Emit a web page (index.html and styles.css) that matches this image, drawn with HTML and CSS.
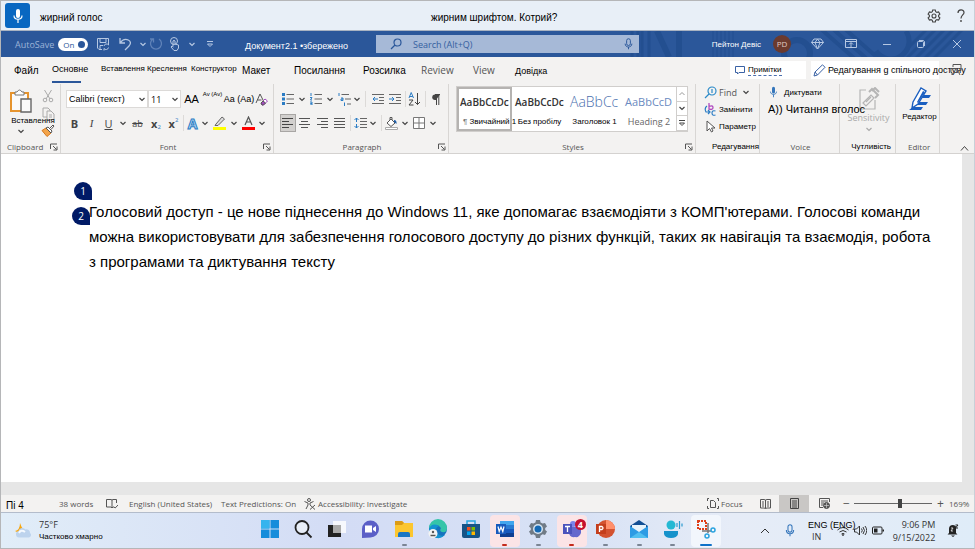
FILE: index.html
```html
<!DOCTYPE html>
<html lang="uk">
<head>
<meta charset="utf-8">
<title>Документ2.1</title>
<link rel="stylesheet" href="styles.css">
</head>
<body>
<svg class="defs" aria-hidden="true">
  <symbol id="chev" viewBox="0 0 8 8"><path d="M1.500 3 4 5.500 6.500 3" fill="none" stroke="currentColor" stroke-width="1.200"/></symbol>
  <symbol id="launch" viewBox="0 0 8 8"><path d="M.5 6V1H7M3 3l3.500 3.500M7 3.500V7H3.500" fill="none" stroke="#555"/></symbol>
  <symbol id="mic" viewBox="0 0 12 16"><rect x="4" y="1" width="4" height="9" rx="2" fill="currentColor"/><path d="M2 7.500c0 5 8 5 8 0M6 11.500V15" fill="none" stroke="currentColor" stroke-width="1.200"/></symbol>
  <symbol id="mic-line" viewBox="0 0 12 16"><rect x="3.500" y="1" width="5" height="9" rx="2.500" fill="none" stroke="currentColor" stroke-width="1.300"/><path d="M1.500 7.500c0 6 9 6 9 0M6 12v3" fill="none" stroke="currentColor" stroke-width="1.300"/></symbol>
</svg>
<div class="app">
  <header class="voice">
    <button class="voice-mic" aria-label="Мікрофон"><svg width="12" height="16"><use href="#mic"/></svg></button>
    <span class="voice-state">жирний голос</span>
    <span class="voice-phrase">жирним шрифтом. Котрий?</span>
    <button class="plain" aria-label="Параметри"><svg width="14" height="14" viewBox="0 0 14 14" fill="none" stroke="#444" stroke-width="1.100"><path d="m5.700 1-.4 1.700-1.200.7-1.700-.5L1.100 5.100l1.300 1.200v1.400L1.100 8.900l1.300 2.200 1.700-.5 1.200.7.400 1.700h2.600l.4-1.700 1.200-.7 1.700.5 1.300-2.200-1.300-1.200V6.300l1.300-1.200-1.300-2.200-1.700.5-1.200-.7L8.300 1z"/><circle cx="7" cy="7" r="2"/></svg></button>
    <button class="plain" aria-label="Довідка"><svg width="10" height="14" viewBox="0 0 10 14"><path d="M2 4c0-4 6-4 6-.5C8 6 5 6 5 9.500" fill="none" stroke="#444" stroke-width="1.200"/><circle cx="5" cy="12" r=".9" fill="#444"/></svg></button>
  </header>

  <div class="titlebar">
    <svg class="pattern" width="345" height="26" viewBox="0 0 345 26" fill="none" stroke="#234f90" aria-hidden="true">
      <path d="M3 0v26M9 0v26M13 0v26M20 0v26" stroke-width="3"/><path d="m28 0 12 26M50 0v26" stroke-width="6"/><path d="M84 0v26M88 0v26M92 0v26M96 0v26M100 0v26M104 0v26" stroke-width="1"/>
      <circle cx="168" cy="22" r="13" stroke-width="6"/><path d="m192-2 34 30M204-2l34 30M216-2l34 30" stroke-width="4"/><path d="M277 0a17 17 0 0 1-30 20" stroke-width="5"/><path d="m268 28 30-30M277 28l30-30M286 28l30-30M295 28l30-30M304 28l30-30" stroke-width="3"/>
    </svg>
    <label class="autosave"><span>AutoSave</span><span class="toggle"><span>On</span><input type="checkbox" checked></span></label>
    <div class="quick">
      <button class="plain" aria-label="Save"><svg width="14" height="14" viewBox="0 0 14 14" fill="none" stroke="currentColor"><path d="M6 12.500H3L1.500 11V1.500h11V6M4 1.500v4h6v-4M4 12V8.500h3M8 9a2.500 2.500 0 0 1 4.500-1V6M12.500 10.500a2.500 2.500 0 0 1-4.500 1v2"/></svg></button>
      <button class="plain" aria-label="Undo"><svg width="14" height="14" viewBox="0 0 14 14" fill="none" stroke="currentColor" stroke-width="1.300"><path d="M2 1v5h5M2 6c5-7 14-2 9 3l-4 4"/></svg></button>
      <svg width="8" height="8"><use href="#chev"/></svg>
      <button class="plain dim" aria-label="Redo"><svg width="14" height="14" viewBox="0 0 14 14" fill="none" stroke="currentColor" stroke-width="1.300"><path d="M4 2a5.500 5.500 0 1 0 6 0M1 2h3.500v3.500"/></svg></button>
      <button class="plain" aria-label="Touch"><svg width="12" height="14" viewBox="0 0 12 14" fill="none" stroke="currentColor"><circle cx="5" cy="4" r="3.500"/><path d="M4 9V4q1-1.500 2 0v3l3.500 1v3l-1.500 2.500H5L2 10l1-1 1.500 1"/></svg></button>
      <svg width="8" height="8"><use href="#chev"/></svg>
      <button class="plain" aria-label="Customize"><svg width="8" height="8" viewBox="0 0 8 8" fill="none" stroke="currentColor"><path d="M1 1.500h6M1.500 4 4 6.500 6.500 4z"/></svg></button>
    </div>
    <span class="doc-name">Документ2.1 •збережено</span>
    <label class="search"><svg width="12" height="12" viewBox="0 0 12 12" fill="none" stroke="currentColor" stroke-width="1.200"><circle cx="7.500" cy="4.500" r="3.500"/><path d="M5 7 1 11"/></svg><input type="text" placeholder="Search (Alt+Q)" aria-label="Search"><svg width="9" height="12"><use href="#mic-line"/></svg></label>
    <div class="account"><span>Пейтон Девіс</span><span class="avatar">PD</span></div>
    <div class="win">
      <button class="plain" aria-label="Premium"><svg width="13" height="12" viewBox="0 0 13 12" fill="none" stroke="currentColor"><path d="M3 1h7l2.500 3.500-6 6.500-6-6.500zM.5 4.500h12M4 4.500 6.500 11 9 4.500 6.500 1z"/></svg></button>
      <button class="plain" aria-label="Ribbon display"><svg width="12" height="10" viewBox="0 0 12 10" fill="none" stroke="currentColor"><path d="M.5.5h11v8H.5zM.5 2.500h11M6 8V4M4 5.500l2-2 2 2"/></svg></button>
      <button class="plain" aria-label="Minimize"><svg width="10" height="10" viewBox="0 0 10 10"><path d="M1 5.500h8" stroke="currentColor"/></svg></button>
      <button class="plain" aria-label="Restore"><svg width="10" height="10" viewBox="0 0 10 10" fill="none" stroke="currentColor"><rect x="1.500" y="2.500" width="6" height="6" rx="1"/><path d="M3 1.500h4.500l1 1V7"/></svg></button>
      <button class="plain" aria-label="Close"><svg width="10" height="10" viewBox="0 0 10 10"><path d="m1 1 8 8m0-8L1 9" stroke="currentColor"/></svg></button>
    </div>
  </div>

  <nav class="tabs">
    <a href="#" class="f10">Файл</a><a href="#" class="f9 active"><span>Основне</span></a><a href="#" class="f8 up">Вставлення</a><a href="#" class="f8 up">Креслення</a><a href="#" class="f8 up">Конструктор</a><a href="#" class="f10">Макет</a><a href="#" class="f10">Посилання</a><a href="#" class="f10">Розсилка</a><a href="#" class="segoe">Review</a><a href="#" class="segoe">View</a><a href="#" class="f9">Довідка</a>
    <div class="tab-actions">
      <button class="comments"><svg width="10" height="9" viewBox="0 0 10 9" fill="none" stroke="#3a62a5"><path d="M.5.500h9v6H4L2.500 8V6.500h-2z"/></svg><span>Примітки</span></button>
      <button class="share"><svg width="13" height="13" viewBox="0 0 13 13" fill="none" stroke="#3a62a5"><path d="m1 12 1-4L9.500.8l2.500 2.500L4.500 11zM2 8l2.500 3"/></svg><span>Редагування g спільного доступу</span></button>
      <svg class="share-icon" width="12" height="12" viewBox="0 0 12 12" fill="none" stroke="#555"><path d="M3 3V.5h8v6H8M1 4.500h6v4H4l-2 2v-2H1zM8 7l2 4"/></svg>
    </div>
  </nav>

  <main class="ribbon">
    <section class="group clipboard">
      <div class="clip">
        <button class="paste"><svg width="24" height="26" viewBox="0 0 24 26"><path d="M2 4h17v18H2z" fill="#fafafa" stroke="#e6942e" stroke-width="2"/><path d="M6 5V3h2q2.500-4 5 0h2v3H6z" fill="#fff" stroke="#777"/><path d="M12 10h10v13H12z" fill="#fafafa" stroke="#666" stroke-width="1.400"/></svg><span>Вставлення</span><svg width="8" height="8"><use href="#chev"/></svg></button>
        <div class="clip-side">
          <button class="plain" aria-label="Cut"><svg width="12" height="14" viewBox="0 0 12 14" fill="none" stroke="#aaa"><path d="m2.500 1 5.500 9M9.500 1 4 10"/><circle cx="3" cy="11" r="1.800"/><circle cx="9" cy="11" r="1.800"/></svg></button>
          <button class="plain" aria-label="Copy"><svg width="13" height="13" viewBox="0 0 13 13" fill="#f3f2f1" stroke="#aaa"><path d="M1 1h5l2 2v7H1z"/><path d="M5 4h4l3 3v5.500H5zM7 8h3M7 10h3"/></svg></button>
          <button class="plain" aria-label="Format painter"><svg width="14" height="13" viewBox="0 0 14 13"><path d="M1 6.500 5 4l5 5-4 3.500z" fill="#f3a44a" stroke="#d7781d"/><path d="m5 4 2-1 4 4-1 2zM9 4l3-3 1 1-3 3.500" fill="#fff" stroke="#555"/></svg></button>
        </div>
      </div>
      <footer><span>Clipboard</span><svg width="8" height="8"><use href="#launch"/></svg></footer>
    </section>

    <section class="group font">
      <div class="row font-a">
        <label class="combo"><select aria-label="Font"><option>Calibri (текст)</option></select><svg width="8" height="8"><use href="#chev"/></svg></label>
        <label class="combo size"><select aria-label="Size"><option>11</option></select><svg width="8" height="8"><use href="#chev"/></svg></label>
        <button class="plain f11">AA</button><button class="plain f6 raised">Aᴠ (Aᴠ)</button><button class="plain f9">Aa (Aa)</button>
        <button class="plain" aria-label="Clear formatting"><svg width="13" height="13" viewBox="0 0 13 13" fill="none" stroke="#555"><path d="m1 10 4-9 3.500 7M2.500 7h4"/><path d="m6 10 4-4 2.500 2-4 4H7z" fill="#fff" stroke="#a24bbd"/><path d="m6 10 2-2 2.500 2-2 2H7z" fill="#a24bbd"/></svg></button>
      </div>
      <div class="row font-b">
        <button class="plain"><b>B</b></button><button class="plain"><i>I</i></button><button class="plain"><u>U</u></button><svg width="8" height="8"><use href="#chev"/></svg><button class="plain"><s>ab</s></button><button class="plain"><b>x</b><sub>2</sub></button><button class="plain"><b>x</b><sup>2</sup></button>
        <i class="sep"></i>
        <button class="plain effect">A</button><svg width="8" height="8"><use href="#chev"/></svg>
        <button class="plain" aria-label="Highlight"><svg width="13" height="14" viewBox="0 0 13 14"><path d="m3 8 6-7 2.500 2L5 9.500H2z" fill="#ddd" stroke="#666"/><path d="M0 11h13v3H0z" fill="#ff0"/></svg></button><svg width="8" height="8"><use href="#chev"/></svg>
        <button class="plain" aria-label="Font color"><svg width="13" height="14" viewBox="0 0 13 14"><path d="m3 9 3.500-8L10 9M4.500 6h4" fill="none" stroke="#555" stroke-width="1.200"/><path d="M0 11h13v3H0z" fill="#f00"/></svg></button><svg width="8" height="8"><use href="#chev"/></svg>
      </div>
      <footer><span>Font</span><svg width="8" height="8"><use href="#launch"/></svg></footer>
    </section>

    <section class="group para">
      <div class="row para-a">
        <button class="plain" aria-label="Bullets"><svg width="12" height="12" viewBox="0 0 12 12"><path d="M0 0h3v3H0zM0 4.500h3v3H0zM0 9h3v3H0z" fill="#2b7cc4"/><path d="M4.500 1.500H12M4.500 6H12M4.500 10.500H12" stroke="#666"/></svg></button><svg width="8" height="8"><use href="#chev"/></svg>
        <button class="plain" aria-label="Numbering"><svg width="12" height="12" viewBox="0 0 12 12"><path d="M1 0v3M0 4.500h2L.5 7H2M0 9h2v1.500H.5H2V12H0" fill="none" stroke="#2b7cc4"/><path d="M4.500 1.500H12M4.500 6H12M4.500 10.500H12" stroke="#666"/></svg></button><svg width="8" height="8"><use href="#chev"/></svg>
        <button class="plain" aria-label="Multilevel list"><svg width="13" height="13" viewBox="0 0 13 13"><path d="M1 0v3M3 5h2v2.500H3V6h2M6.500 9.500V13" fill="none" stroke="#2b7cc4"/><path d="M3.500 1.500H11M7 6h6M9 11h4" stroke="#666"/></svg></button><svg width="8" height="8"><use href="#chev"/></svg>
        <i class="sep"></i>
        <button class="plain" aria-label="Decrease indent"><svg width="12" height="12" viewBox="0 0 12 12" fill="none"><path d="M0 1.500h12M7 4.500h5M7 7.500h5M0 10.500h12" stroke="#666"/><path d="M6 6H1m2-2L1 6l2 2" stroke="#2b7cc4"/></svg></button>
        <button class="plain" aria-label="Increase indent"><svg width="12" height="12" viewBox="0 0 12 12" fill="none"><path d="M0 1.500h12M7 4.500h5M7 7.500h5M0 10.500h12" stroke="#666"/><path d="M0 6h5M3 4l2 2-2 2" stroke="#2b7cc4"/></svg></button>
        <i class="sep"></i>
        <button class="plain" aria-label="Sort"><svg width="13" height="14" viewBox="0 0 13 14" fill="none"><path d="m1 6 2.200-5.500L5.500 6M1.800 4.500h3" stroke="#2b7cc4"/><path d="M1 8h4l-4 5h4.500M9.500 1v11.500M7 10l2.500 2.500L12 10" stroke="#444"/></svg></button>
        <i class="sep"></i>
        <button class="plain" aria-label="Marks"><svg width="8" height="11" viewBox="0 0 8 11"><path d="M8 .5H3a2.500 2.500 0 0 0 0 5.500h1" fill="#444"/><path d="M4.500 0v11M6.800 0v11M3 .5h5" stroke="#444"/></svg></button>
      </div>
      <div class="row para-b">
        <button class="plain pressed" aria-label="Align left"><svg width="11" height="11" viewBox="0 0 11 11"><path d="M0 .5h11M0 3.500h7M0 6.500h11M0 9.500h7" stroke="#444"/></svg></button>
        <button class="plain" aria-label="Center"><svg width="11" height="11" viewBox="0 0 11 11"><path d="M0 .5h11M2 3.500h7M0 6.500h11M2 9.500h7" stroke="#555"/></svg></button>
        <button class="plain" aria-label="Align right"><svg width="11" height="11" viewBox="0 0 11 11"><path d="M0 .5h11M4 3.500h7M0 6.500h11M4 9.500h7" stroke="#555"/></svg></button>
        <button class="plain" aria-label="Justify"><svg width="11" height="11" viewBox="0 0 11 11"><path d="M0 .5h11M0 3.500h11M0 6.500h11M0 9.500h11" stroke="#555"/></svg></button>
        <i class="sep"></i>
        <button class="plain" aria-label="Line spacing"><svg width="13" height="12" viewBox="0 0 13 12" fill="none"><path d="M2.500 1v4M.5 3l2-2 2 2M2.500 11V7M.5 9l2 2 2-2" stroke="#2b7cc4"/><path d="M6 1.500h7M6 4.500h7M6 7.500h7M6 10.500h7" stroke="#666"/></svg></button><svg width="8" height="8"><use href="#chev"/></svg>
        <i class="sep"></i>
        <button class="plain" aria-label="Shading"><svg width="13" height="13" viewBox="0 0 13 13"><path d="m2 6 4-4 4 4-4 3.500zM5 3V.5h2V3" fill="#fff" stroke="#555"/><path d="M9 3q3 0 2.500 4L9 5z" fill="#1f5fa8"/><path d="M.5 10.500h12v2H.5z" fill="#fff" stroke="#aaa"/></svg></button><svg width="8" height="8"><use href="#chev"/></svg>
        <button class="plain" aria-label="Borders"><svg width="12" height="12" viewBox="0 0 12 12"><path d="M.5.500h11v11H.5zM6 0v12M0 6h12" fill="#fff" stroke="#777"/></svg></button><svg width="8" height="8"><use href="#chev"/></svg>
      </div>
      <footer><span>Paragraph</span><svg width="8" height="8"><use href="#launch"/></svg></footer>
    </section>

    <section class="group styles">
      <div class="gallery">
        <button class="style chosen"><strong>AaBbCcDc</strong><span><em>¶</em> Звичайний 1</span></button>
        <button class="style"><strong>AaBbCcDc</strong><span>Без пробілу</span></button>
        <button class="style head1"><strong>AaBbCc</strong><span>Заголовок 1</span></button>
        <button class="style head2"><strong>AaBbCcD</strong><span>Heading 2</span></button>
        <div class="scroll">
          <button aria-label="Up"><svg width="8" height="8" viewBox="0 0 8 8"><path d="M1.500 5 4 2.500 6.500 5" fill="none" stroke="#999"/></svg></button>
          <button aria-label="Down"><svg width="8" height="8"><use href="#chev"/></svg></button>
          <button aria-label="More"><svg width="8" height="8" viewBox="0 0 8 8" fill="none" stroke="#444"><path d="M1 1.500h6M1.500 4 4 6.500 6.500 4z"/></svg></button>
        </div>
      </div>
      <footer><span>Styles</span><svg width="8" height="8"><use href="#launch"/></svg></footer>
    </section>

    <section class="group editing">
      <div class="list">
        <button><svg width="13" height="13" viewBox="0 0 13 13" fill="none" stroke="#2b8ac8" stroke-width="1.200"><circle cx="8" cy="5" r="4"/><path d="m5 8-4 4M8 3v4"/></svg><span class="segoe">Find</span><svg width="8" height="8"><use href="#chev"/></svg></button>
        <button><svg width="13" height="13" viewBox="0 0 13 13" fill="none"><path d="M5 0v6q4 1 4-1.500T5 3.500" stroke="#b04cc0" stroke-width="1.300"/><path d="M3 3Q0 5 2 9h3M4 7l2 2-2 2M11.500 8Q8 7 8 10t3.500 2" stroke="#2b7cc4" stroke-width="1.200"/></svg><span>Замінити</span></button>
        <button><svg width="13" height="13" viewBox="0 0 13 13"><path d="M3 1v10l2.500-2.500L7.500 12 9 11 7.500 8H11z" fill="#fff" stroke="#555"/></svg><span>Параметр</span></button>
      </div>
      <footer class="dark end"><span>Редагування</span></footer>
    </section>

    <section class="group voice-group">
      <div class="list">
        <button><svg class="blue" width="9" height="12"><use href="#mic"/></svg><span>Диктувати</span></button>
        <button class="read"><span>A)) Читання вголос</span></button>
      </div>
      <footer><span>Voice</span></footer>
    </section>

    <section class="group sensitivity">
      <button class="tall"><svg width="22" height="24" viewBox="0 0 22 24" fill="none" stroke="#b5b5b5" stroke-width="1.200"><path d="M8 3H2v19h15v-9"/><path d="m5 16 8-8 3 3-8 8zM8 15l5-5"/><path d="m11 5 3-3 6 6-3 3M14 4l3-3 4 4" stroke-width="2"/></svg><span>Sensitivity</span><svg width="8" height="8"><use href="#chev"/></svg></button>
      <footer class="dark"><span>Чутливість</span></footer>
    </section>

    <section class="group editor">
      <button class="tall"><svg width="24" height="24" viewBox="0 0 24 24"><path d="M14 8h9l-2 3h-9zM9 15h11l-2 3H9zM5 20h10l-2 3H1z" fill="#1b5fc0"/><path d="m5 15 8-14 5 3-8 13-6 4z" fill="#fff" stroke="#1b5fc0" stroke-width="1.400"/><path d="m9 15 6-11 2 1-7 11z" fill="#1b5fc0"/></svg><span>Редактор</span></button>
      <footer><span>Editor</span></footer>
    </section>
    <button class="collapse" aria-label="Collapse"><svg width="9" height="7" viewBox="0 0 9 7"><path d="m1 5.500 3.500-4 3.500 4" fill="none" stroke="#444"/></svg></button>
  </main>

  <div class="canvas">
    <article class="page">
      <span class="pin one">1</span>
      <p><span class="pin two">2</span>Голосовий доступ - це нове піднесення до Windows 11, яке допомагає взаємодіяти з КОМП'ютерами. Голосові команди можна використовувати для забезпечення голосового доступу до різних функцій, таких як навігація та взаємодія, робота з програмами та диктування тексту</p>
    </article>
  </div>

  <div class="status">
    <span class="page-no">Пі 4</span><span>38 words</span>
    <svg width="12" height="10" viewBox="0 0 12 10" fill="none" stroke="#555"><path d="M6 1v8L5 8H.5V.5H5L6 1l1-.5h3.500V4M6 9l1-1h1m0 0 1.200 1L12 6"/></svg>
    <span>English (United States)</span><span>Text Predictions: On</span>
    <svg width="12" height="12" viewBox="0 0 12 12" fill="none" stroke="#555"><circle cx="5" cy="2" r="1.500"/><path d="M.5 3.500 4 5v2l-2 4M9.500 3.500 6 5v2M6 7l5 4.500M11 7l-5 4.500"/></svg>
    <span>Accessibility: Investigate</span>
    <div class="views">
      <svg width="12" height="11" viewBox="0 0 12 11" fill="none" stroke="#555"><path d="M3.500 2.500h3l2 2v5h-5zM2 .5H.5V3M10 .5h1.500V3M.5 8v2.500H2M11.500 8v2.500H10"/></svg><span>Focus</span>
      <button class="plain" aria-label="Read mode"><svg width="11" height="10" viewBox="0 0 11 10" fill="none" stroke="#555"><path d="M5.500 1v8.500M.5.500H4L5.500 1 7 .5h3.500V9H7l-1.500.5L4 9H.5zM2 3h2M2 5h2M2 7h2M7 3h2M7 5h2M7 7h2"/></svg></button>
      <button class="plain current" aria-label="Print layout"><svg width="9" height="11" viewBox="0 0 9 11" fill="none" stroke="#444"><path d="M.5.500h8v10h-8zM2 3h5M2 5h5M2 7h5M2 9h5"/></svg></button>
      <button class="plain" aria-label="Web layout"><svg width="11" height="11" viewBox="0 0 11 11" fill="none" stroke="#555"><path d="M4 9.500H.5v-9h10V4M2 3h7M2 5h3M2 7h2"/><circle cx="7.500" cy="7.500" r="3" fill="#555"/><path d="M5 7.500h5M7.500 5v5" stroke="#ddd" stroke-width=".6"/></svg></button>
      <span class="zoom-sign">−</span><input class="zoom" type="range" min="0" max="100" value="59" aria-label="Zoom"><span class="zoom-sign">+</span><span>169%</span>
    </div>
  </div>

  <div class="taskbar">
    <button class="weather"><svg width="18" height="16" viewBox="0 0 18 16"><path d="M6 0Q7 4 10 7q-3 5-9 1 5-1 5-8z" fill="#f8a60c"/><path d="M5 14.500a3.300 3.300 0 0 1-.5-6.500 4 4 0 0 1 7-1.500 3.500 3.500 0 0 1 4.500 3.500 2.500 2.500 0 0 1-1 4.500z" fill="#bdd3ed"/><path d="M5 10q2-4 6-1" stroke="#f4f9ff" stroke-width="2" fill="none"/></svg><span class="wx"><span>75°F</span><span class="wx-text">Частково хмарно</span></span></button>
    <div class="apps">
      <button aria-label="Start"><svg width="20" height="20" viewBox="0 0 20 20"><path d="M1 1h8.500v8.500H1zM10.500 1H19v8.500h-8.500zM1 10.500h8.500V19H1zM10.500 10.500H19V19h-8.500z" fill="#168ddb"/><path d="M1 1h8.500v8.500H1z" fill="#36b4ee"/></svg></button>
      <button aria-label="Search"><svg width="20" height="20" viewBox="0 0 20 20" fill="#e8eef8" stroke="#222" stroke-width="1.800"><circle cx="9" cy="8.500" r="6.500"/><path d="m13.500 13.500 5 5"/></svg></button>
      <button aria-label="Task view"><svg width="20" height="20" viewBox="0 0 20 20"><path d="M1 6h13v12H1z" fill="#222"/><path d="M6 2h13v12H6z" fill="#fff" opacity=".8"/><path d="M6 6h8v8H6z" fill="#aaa"/></svg></button>
      <button aria-label="Chat"><svg width="20" height="20" viewBox="0 0 20 20"><path d="M2 19V10a8.500 8.500 0 1 1 8.500 8.500z" fill="#5b5fc7"/><path d="M5 6.500h7v7H5zM13 9l3-2v6l-3-2z" fill="#fff"/></svg></button>
      <button class="run" aria-label="Explorer"><svg width="20" height="20" viewBox="0 0 20 20"><path d="M1 2h7l2 2h9v14H1z" fill="#fcc62f"/><path d="M1 2h7l2 2-2 2H1z" fill="#dc9b14"/><path d="M4 18v-3q0-2 2-2h8q2 0 2 2v3z" fill="#1976c5"/></svg></button>
      <button aria-label="Edge"><svg width="20" height="20" viewBox="0 0 20 20"><circle cx="10" cy="10" r="9" fill="#1673be"/><path d="M1 9a9 9 0 0 1 18 0q0 5-5 4-3-1-1-4-4-6-12 0z" fill="#35c5a9"/><path d="M1 10q3-7 10-3-5 2-2 7 3 4 8 2-6 6-12 1-4-2-4-7z" fill="#1493d1"/><circle cx="5" cy="14.500" r="4.500" fill="#f3f3f3"/><circle cx="5" cy="13" r="1.200" fill="#555"/><path d="M2.500 16.500h5" stroke="#555" stroke-width="1.500"/></svg></button>
      <button aria-label="Store"><svg width="20" height="20" viewBox="0 0 20 20"><path d="M6 5V2h8v3" fill="none" stroke="#29a7e0" stroke-width="1.500"/><path d="M1 5h18v12q0 2-2 2H3q-2 0-2-2z" fill="#175487"/><path d="M6 8h3.500v3.500H6z" fill="#f25022"/><path d="M10.500 8H14v3.500h-3.500z" fill="#7fba00"/><path d="M6 12.500h3.500V16H6z" fill="#00a4ef"/><path d="M10.500 12.500H14V16h-3.500z" fill="#ffb900"/></svg></button>
      <button class="run alert" aria-label="Word"><svg width="20" height="20" viewBox="0 0 20 20"><path d="M5 2h14v16H5z" fill="#2b7cd3"/><path d="M5 2h14v4H5z" fill="#41a5ee"/><path d="M5 10h14v4H5z" fill="#185abd"/><path d="M5 14h14v4H5z" fill="#103f91"/><path d="M1 5h10v10H1z" fill="#185abd"/><path d="m3 7.500 1.200 5L6 8l1.800 4.500L9 7.500" fill="none" stroke="#fff" stroke-width="1.200"/></svg></button>
      <button class="run" aria-label="Settings"><svg width="20" height="20" viewBox="0 0 20 20"><path d="m8 1-.6 2.500-2 1L3 4 1 7.500 2.800 9v2L1 12.500 3 16l2.400-.7 2 1.200L8 19h4l.6-2.500 2-1.200L17 16l2-3.500-1.800-1.500V9L19 7.500 17 4l-2.400.5-2-1L12 1z" fill="#707b86"/><circle cx="10" cy="10" r="5" fill="#d6e5f2"/><circle cx="10" cy="10" r="3.500" fill="#1469b4"/></svg></button>
      <button class="run alert" aria-label="Teams"><svg width="20" height="20" viewBox="0 0 20 20"><circle cx="11" cy="5" r="3" fill="#7b83eb"/><path d="M7 8h12v6q-2 5-6 4-6 1-6-5z" fill="#6468cd"/><path d="M1 5h9v10H1z" fill="#4b53bc"/><path d="M3 7.500h5M5.500 7.500V13" stroke="#fff" stroke-width="1.300"/></svg><span class="badge">4</span></button>
      <button class="run" aria-label="PowerPoint"><svg width="20" height="20" viewBox="0 0 20 20"><circle cx="11" cy="10" r="9" fill="#d35230"/><path d="M11 1a9 9 0 0 1 9 9h-9z" fill="#ff8f6b"/><path d="M1 5h10v10H1z" fill="#c43e1c"/><path d="M4.500 13V7.500H7q2 1.500 0 3H4.500" fill="none" stroke="#fff" stroke-width="1.300"/></svg></button>
      <button class="run" aria-label="Mail"><svg width="20" height="20" viewBox="0 0 20 20"><path d="m1 7 9-6 9 6v3H1z" fill="#124f94"/><path d="M3 6h14v8H3z" fill="#e7f3fb"/><path d="m1 7 9 6 9-6v12H1z" fill="#2e9be4"/><path d="m1 19 9-6 9 6z" fill="#52bff0"/></svg></button>
      <button class="run" aria-label="Voice access"><svg width="20" height="20" viewBox="0 0 20 20"><circle cx="8" cy="6" r="4.500" fill="#24b8d3"/><path d="M1 12h14v3q-1 4-7 4t-7-4z" fill="#1692cb"/><path d="M14 4v4M16.500 2v8M19 4.500v3" stroke="#2b9bd0" stroke-width="1.200"/></svg></button>
      <button class="run focused" aria-label="Snipping tool"><svg width="20" height="20" viewBox="0 0 20 20" fill="none"><path d="M2 2h8v8H2z" stroke="#df3f19" stroke-width="2" stroke-dasharray="2 1"/><path d="M12 4v10M6 12h9" stroke="#777" stroke-width="1.500"/><circle cx="17" cy="11" r="2" stroke="#2aa3df" stroke-width="1.500"/><circle cx="11" cy="17" r="2" stroke="#2aa3df" stroke-width="1.500"/></svg></button>
    </div>
    <div class="tray">
      <button class="plain" aria-label="Hidden icons"><svg width="10" height="8" viewBox="0 0 10 8"><path d="m1 6 4-4 4 4" fill="none" stroke="#333"/></svg></button>
      <button class="plain blue" aria-label="Microphone"><svg width="10" height="13"><use href="#mic-line"/></svg></button>
      <button class="plain lang"><span>ENG (ENG)</span><span class="segoe">IN</span></button>
      <button class="plain" aria-label="Network"><svg width="12" height="10" viewBox="0 0 12 10" fill="none" stroke="#333"><path d="M.5 4q5.500-5 11 0M2.500 6q3.500-3 7 0M4.500 8q1.500-1.200 3 0"/><circle cx="6" cy="9" r=".6"/></svg></button>
      <button class="plain" aria-label="Sound"><svg width="13" height="11" viewBox="0 0 13 11" fill="none" stroke="#333"><path d="M.5 4h2l3-3v9l-3-3h-2zM7.500 3.500q1.500 2 0 4M9 2q3 3.500 0 7M11 1q3.500 4.500 0 9"/></svg></button>
      <button class="plain" aria-label="Battery"><svg width="12" height="9" viewBox="0 0 12 9"><rect x=".5" y="1" width="9.500" height="7" rx="1" fill="none" stroke="#222"/><path d="M2 2.500h3.500v4H2zM10.500 3.500H12v2h-1.500z" fill="#222"/></svg></button>
      <button class="plain clock"><span>9:06 PM</span><span>9/15/2022</span></button>
      <button class="plain" aria-label="Notifications"><svg width="12" height="13" viewBox="0 0 12 13"><path d="M2 9V5q0-4 4-4 2 0 3 1.500V9l1.500 1.500H.5zM4 11.500h4L6 13z" fill="#222"/><path d="M4 4h2L4 7h2" fill="none" stroke="#eee" stroke-width=".8"/><path d="M8.500 1h2.500l-2.500 3H11" fill="none" stroke="#222"/></svg></button>
    </div>
  </div>
</div>
</body>
</html>
```
FILE: styles.css
```css
* { box-sizing: border-box; }
body { margin: 0; font-family: "Liberation Sans", Arial, sans-serif; font-size: 10px; color: #000; }
button, input, select { font: inherit; color: inherit; }
button { border: 0; padding: 0; background: none; white-space: nowrap; }
a { color: inherit; text-decoration: none; }
svg { display: block; flex: none; }
.defs { position: absolute; width: 0; height: 0; }
.segoe { font-family: "Open Sans", sans-serif; color: #555; }
.plain { display: flex; align-items: center; justify-content: center; }
.blue { color: #3576bb; }
.f6 { font-size: 6px; }
.f8 { font-size: 8px; }
.f9 { font-size: 9px; }
.f10 { font-size: 10px; }
.f11 { font-size: 11px; }

.app { min-height: 100vh; display: flex; flex-direction: column; border: 1px solid #b5b6b8; border-right-color: #c8d0d8; overflow: hidden; }

/* Voice access bar */
.voice { display: grid; grid-template-columns: 39px 391px 1fr 27px 27px; align-items: center; height: 30px; background: #e8eff7; border-bottom: 1px solid #a9b3c2; }
.voice-mic { width: 25px; height: 25px; margin-left: 4px; border-radius: 3px; background: #0867c1; color: #fff; display: flex; align-items: center; justify-content: center; }
.voice-state, .voice-phrase { padding-top: 4px; }

/* Title bar */
.titlebar { position: relative; display: grid; grid-template-columns: 95px 149px 131px minmax(100px, 1fr) 164px 171px; align-items: center; height: 26px; background: #2b579a; color: #b6c8e3; }
.titlebar > * { position: relative; }
.titlebar > .pattern { position: absolute; right: 0; top: 0; }
.autosave { display: flex; align-items: center; gap: 4px; padding-left: 14px; font: 9px "Open Sans", sans-serif; color: #9db4d8; }
.toggle { display: flex; align-items: center; justify-content: space-between; width: 30px; height: 13px; border-radius: 7px; background: #fff; padding: 0 3px 0 5px; font-size: 8px; color: #2b579a; }
.toggle input { appearance: none; width: 7px; height: 7px; margin: 0; border-radius: 50%; background: #2b579a; }
.quick { display: grid; grid-template-columns: 14px 29px 8px 18px 20px 14px 22px; align-items: center; justify-items: center; }
.dim { color: #5f82b8; }
.doc-name { color: #fff; padding-top: 4px; font-size: 9px; white-space: nowrap; }
.search { display: flex; align-items: center; gap: 11px; height: 18px; padding: 0 6px 0 14px; background: #a6b9d7; color: #2b579a; }
.search input { flex: 1; min-width: 0; border: 0; padding: 0; background: none; font: 9px "Open Sans", sans-serif; outline: 0; }
.search input::placeholder { color: #35609f; opacity: 1; }
.account { display: flex; align-items: center; justify-content: flex-end; gap: 12px; padding-right: 12px; font-size: 8px; color: #fff; }
.avatar { width: 18px; height: 18px; border-radius: 50%; background: #6b3a2e; color: #e1c9c2; font: 8px/18px "Open Sans", sans-serif; text-align: center; }
.win { display: grid; grid-template-columns: 28px 40px 32px 36px 36px; justify-items: center; }

/* Ribbon tabs */
.tabs { display: grid; grid-template-columns: 38px 49px 46px 44px 51px 52px 69px 58px 52px 42px 34px 1fr; align-items: center; height: 26px; padding-left: 13px; background: #f3f2f1; white-space: nowrap; }
.tabs a { line-height: 18px; }
.tabs .f10, .tabs .f9 { padding-top: 2px; }
.tabs .up { padding-bottom: 3px; }
.tabs .active { align-self: stretch; padding-top: 4px; }
.tabs .active span { display: block; width: 29px; height: 22px; line-height: 17px; border-bottom: 2px solid #2b579a; }
.tab-actions { display: grid; grid-template-columns: 76px 137px 12px; column-gap: 5px; justify-content: end; align-items: center; padding-right: 9px; }
.tab-actions button { display: flex; align-items: center; background: #fff; height: 18px; }
.comments { gap: 3px; padding-left: 5px; font-size: 8px; }
.comments span { border-bottom: 1px dashed #4a6fae; line-height: 11px; }
.share { gap: 2px; padding-left: 2px; width: 128px; font-size: 9px; }
.share-icon { margin-left: -3px; }

/* Ribbon groups */
.ribbon { display: grid; grid-template-columns: 60px 213px 175px 247px 64px 80px 56px 44px 1fr; height: 71px; padding-top: 1px; background: #f3f2f1; border-bottom: 1px solid #d4d2d0; color: #444; }
.group { display: flex; flex-direction: column; border-right: 1px solid #d8d6d4; padding-top: 5px; min-width: 0; }
.group footer { display: grid; grid-template-columns: 8px 1fr 8px; align-items: center; margin-top: auto; padding: 0 2px 0 4px; font: 8px/12px "Open Sans", sans-serif; color: #555; text-align: center; white-space: nowrap; }
.group footer span { grid-column: 2; justify-self: center; }
.group footer.dark { font-family: "Liberation Sans", Arial, sans-serif; color: #000; display: flex; justify-content: flex-end; padding: 0 4px 0 0; }
.group footer.end { padding: 0; }
.row { display: grid; align-items: center; justify-items: center; height: 20px; margin-bottom: 4px; }
.sep { width: 1px; height: 16px; background: #dcdad8; }

.clip { display: flex; }
.paste { display: flex; flex-direction: column; align-items: center; width: 40px; font-size: 8px; }
.paste span { position: relative; z-index: 1; line-height: 12px; margin-left: 24px; color: #000; }
.clip-side { display: flex; flex-direction: column; gap: 4px; }
.group.clipboard footer { grid-template-columns: 1fr 8px; padding: 0 2px 0 6px; }
.group.clipboard footer span { grid-column: 1; justify-self: start; }

.font-a { grid-template-columns: 82px 33px 21px 21px 32px 13px; padding-left: 5px; justify-content: start; }
.font-a .plain { color: #000; }
.raised { align-self: start; padding-top: 2px; }
.combo { display: flex; align-items: center; justify-self: stretch; height: 18px; background: #fff; border: 1px solid #dcdad8; padding-right: 1px; font-size: 9px; color: #444; }
.combo select { appearance: none; border: 0; background: none; flex: 1; min-width: 0; padding: 0 0 0 2px; color: #000; }
.size { font: 9px "Open Sans", sans-serif; }
.font-b { grid-template-columns: 17px 17px 17px 11px 19px 18px 17px 3px 15px 9px 21px 8px 20px 8px; padding-left: 5px; justify-content: start; font: 11px "Open Sans", sans-serif; }
.font-b i { font-family: "Liberation Serif", serif; }
.font-b s { font-size: 9px; }
.font-b sub, .font-b sup { font-size: 6px; color: #2b7cc4; align-self: flex-end; }
.font-b sup { align-self: flex-start; }
.effect { font-size: 14px; font-weight: 700; color: #b9dcf5; -webkit-text-stroke: 1px #2b7cc4; }

.para-a { grid-template-columns: 14px 13px 15px 14px 15px 9px 8px 17px 17px 4px 14px 8px 14px; padding-left: 7px; justify-content: start; }
.para-b { grid-template-columns: 17px 17px 18px 17px 5px 15px 9px 8px 13px 13px 15px 14px; padding-left: 5px; justify-content: start; }
.pressed { width: 16px; height: 18px; background: #d2d0ce; border: 1px solid #a8a6a4; }

.gallery { display: grid; grid-template-columns: 55px 55px 55px 1fr 11px; height: 46px; margin: -3px 7px 0; background: #fff; border: 1px solid #d0cecc; }
.style { display: flex; flex-direction: column; justify-content: space-between; padding: 7px 3px 3px; overflow: hidden; text-align: left; }
.style strong { font: 600 10px/16px "Open Sans", sans-serif; color: #333; }
.style span { font-size: 8px; line-height: 12px; text-align: center; color: #000; }
.style em { color: #777; font-style: normal; }
.chosen { box-shadow: inset 0 0 0 2px #b5b3b1; overflow: visible; position: relative; z-index: 1; }
.chosen span { text-align: left; padding-left: 3px; }
.head1 strong { font-size: 14px; font-weight: 300; color: #4a6fae; }
.head2 strong { font-size: 11px; font-weight: 400; color: #6a8ac0; }
.head2 span { font: 9px/12px "Open Sans", sans-serif; color: #666; }
.scroll { display: grid; grid-template-rows: repeat(3, 1fr); border-left: 1px solid #d0cecc; }
.scroll button { display: flex; align-items: center; justify-content: center; border-bottom: 1px solid #d0cecc; }

.list { display: flex; flex-direction: column; gap: 3px; margin-top: -4px; padding-left: 8px; }
.list button { display: flex; align-items: center; gap: 2px; height: 14px; font-size: 8px; color: #000; }
.list .segoe { font-size: 9px; padding-right: 3px; }
.list svg { color: #444; }
.list .blue { color: #3576bb; }
.voice-group { position: relative; z-index: 1; }
.voice-group .list button { gap: 6px; padding-left: 1px; }
.voice-group .list .read { font-size: 11px; padding-left: 0; }
.tall { display: flex; flex-direction: column; align-items: center; font-size: 8px; color: #000; }
.sensitivity .tall { font: 9px/14px "Open Sans", sans-serif; color: #aaa; margin-top: -2px; padding-left: 2px; }
.editor .tall { gap: 1px; padding-left: 4px; margin-top: -2px; }
.collapse { align-self: end; justify-self: end; padding: 0 5px 1px 0; }

/* Document */
.canvas { flex: 1; background: #e6e6e6; padding: 0 12px 13px 0; }
.page { height: 100%; min-height: 328px; padding: 28px 24px 20px 73px; background: #fff; }
.page p { position: relative; margin: -1px 0 0 15px; font-size: 15px; line-height: 25px; }
.pin { display: block; width: 18px; height: 18px; border-radius: 9px 9px 0 9px; background: #001a66; color: #fff; font: 10px/18px "Open Sans", sans-serif; text-align: center; }
.two { position: absolute; left: -17px; top: 8px; }

/* Status bar */
.status { display: grid; grid-template-columns: 53px 47px 23px 92px 83px 14px 90px 1fr; align-items: center; height: 18px; padding-left: 5px; background: #f3f2f1; border-bottom: 1px solid #b3bccb; font: 8px "Open Sans", sans-serif; color: #555; white-space: nowrap; }
.page-no { font: 10px "Liberation Sans", Arial, sans-serif; color: #000; padding-top: 4px; }
.views { display: grid; grid-template-columns: 14px 30px 28px 30px 30px 15px 78px 17px 22px; justify-content: end; align-items: center; padding-right: 3px; }
.current { background: #c9c7c5; height: 17px; }
.zoom-sign { font-size: 12px; line-height: 16px; text-align: center; }
.zoom { appearance: none; width: 100%; height: 10px; margin: 0; background: linear-gradient(#666, #666) center / 100% 1px no-repeat; }
.zoom::-webkit-slider-thumb { appearance: none; width: 4px; height: 9px; background: #444; }

/* Taskbar */
.taskbar { display: grid; grid-template-columns: 1fr 470px 251px; align-items: center; height: 35px; background: linear-gradient(90deg, #e1edf8, #d3dcf5 35%, #d8e2f5 60%, #e6ecf7 75%, #dfecf8); }
.weather { display: flex; align-items: center; gap: 7px; padding-left: 13px; text-align: left; }
.wx { display: grid; font: 9px/12px "Open Sans", sans-serif; color: #333; }
.wx-text { font: 8px/12px "Liberation Sans", Arial, sans-serif; color: #000; }
.apps { display: grid; grid-template-columns: repeat(14, 1fr); height: 32px; }
.apps button { position: relative; display: grid; grid-template-rows: 29px 2px; justify-items: center; align-items: center; margin: 0 2px; border-radius: 4px; }
.run::after { content: ""; width: 5px; height: 2px; border-radius: 1px; background: #7b8594; }
.apps .alert { background: #fbe4e6; }
.alert::after { background: #c42b1c; }
.apps .focused { background: #f2f6fc; }
.focused::after { width: 12px; background: #0f72c9; }
.badge { position: absolute; top: 4px; right: 1px; width: 11px; height: 11px; border-radius: 50%; background: #c4122f; color: #fff; font: 700 9px/11px "Open Sans", sans-serif; }
.tray { display: grid; grid-template-columns: 22px 27px 29px 16px 18px 18px 54px 24px; justify-content: end; align-items: center; padding-right: 9px; }
.tray > :first-child, .tray > .blue { padding-right: 6px; }
.lang { position: relative; z-index: 1; flex-direction: column; align-items: flex-start; justify-self: start; padding-left: 2px; font: 9px/12px "Liberation Sans", Arial, sans-serif; }
.lang .segoe { font-size: 9px; color: #333; padding-left: 4px; }
.clock { display: grid; justify-items: end; font: 9px/13px "Open Sans", sans-serif; color: #333; }
```
